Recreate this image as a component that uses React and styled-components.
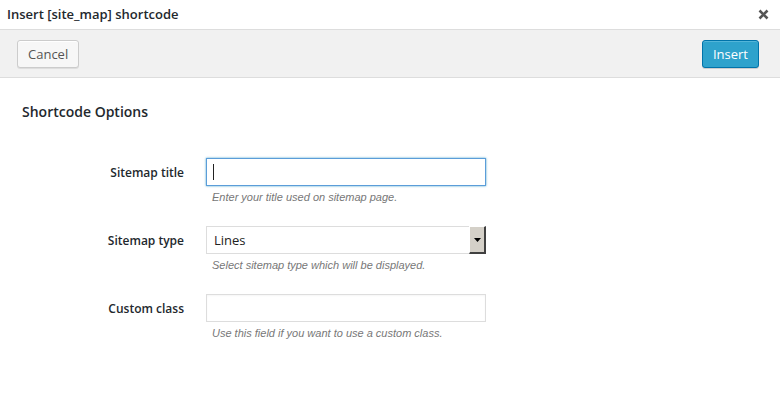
import styled, { createGlobalStyle } from "styled-components";

const GlobalStyle = createGlobalStyle`
  body {
    margin: 0;
    background: #ffffff;
    font-family: "Open Sans", "Noto Sans", sans-serif;
    color: #444;
  }
`;

const Modal = styled.div`
  width: 780px;
  height: 394px;
  background: #fff;
  display: flex;
  flex-direction: column;
`;

const TitleBar = styled.div`
  height: 29px;
  display: flex;
  align-items: center;
  justify-content: space-between;
  padding: 0 10px 0 7px;
  border-bottom: 1px solid #dddddd;
  box-sizing: content-box;
`;

const Title = styled.h1`
  margin: 0;
  font-size: 13px;
  font-weight: 600;
  color: #23282d;
  line-height: 29px;
`;

const Close = styled.button`
  border: 0;
  background: none;
  padding: 0;
  width: 14px;
  height: 14px;
  display: flex;
  align-items: center;
  justify-content: center;
  cursor: pointer;
`;

const Toolbar = styled.div`
  height: 47px;
  background: #f1f1f1;
  border-bottom: 1px solid #dddddd;
  display: flex;
  align-items: center;
  justify-content: space-between;
  padding: 0 21px 0 17px;
`;

const Button = styled.button`
  height: 28px;
  padding: 0 10px;
  font-family: "Open Sans", "Noto Sans", sans-serif;
  font-size: 13px;
  border-radius: 3px;
  cursor: pointer;
  border: 1px solid ${(p) => (p.$primary ? "#0073aa" : "#cccccc")};
  background: ${(p) => (p.$primary ? "#2ea2cc" : "#f7f7f7")};
  color: ${(p) => (p.$primary ? "#ffffff" : "#555555")};
  box-shadow: ${(p) =>
    p.$primary
      ? "inset 0 1px 0 rgba(120,200,230,.5), 0 1px 0 rgba(0,0,0,.15)"
      : "inset 0 1px 0 #fff, 0 1px 0 rgba(0,0,0,.08)"};
`;

const Body = styled.div`
  padding: 23px 22px;
`;

const SectionTitle = styled.h2`
  margin: 0 0 35px;
  font-size: 14px;
  font-weight: 600;
  color: #23282d;
  line-height: 22px;
`;

const Form = styled.div`
  display: flex;
  flex-direction: column;
  gap: 20px;
`;

const Row = styled.div`
  display: grid;
  grid-template-columns: 162px 280px;
  column-gap: 22px;
  align-items: start;
`;

const Label = styled.label`
  font-size: 12px;
  font-weight: 600;
  color: #23282d;
  text-align: right;
  line-height: 28px;
  padding-top: 1px;
`;

const Field = styled.div`
  display: flex;
  flex-direction: column;
`;

const TextInput = styled.div`
  height: 28px;
  box-sizing: border-box;
  border: 1px solid ${(p) => (p.$focus ? "#5b9dd9" : "#dddddd")};
  box-shadow: ${(p) =>
    p.$focus ? "0 0 2px rgba(30,140,190,.8)" : "inset 0 1px 2px rgba(0,0,0,.04)"};
  background: #fff;
  display: flex;
  align-items: center;
  padding-left: 6px;
`;

const Caret = styled.span`
  width: 1px;
  height: 16px;
  background: #222;
`;

const Select = styled.div`
  height: 28px;
  box-sizing: border-box;
  border: 1px solid #dddddd;
  background: #fff;
  display: flex;
  align-items: stretch;
  justify-content: space-between;
  font-size: 13px;
  color: #222;
`;

const SelectValue = styled.span`
  padding-left: 7px;
  line-height: 26px;
`;

const SelectArrow = styled.span`
  width: 14px;
  background: #d4d0c8;
  border-left: 1px solid #fff;
  border-top: 1px solid #fff;
  border-right: 2px solid #404040;
  border-bottom: 2px solid #404040;
  display: flex;
  align-items: center;
  justify-content: center;
  margin: -1px -1px -1px 0;
`;

const Help = styled.p`
  margin: 2px 0 0 6px;
  font-family: "Liberation Sans", Arial, sans-serif;
  font-style: italic;
  font-size: 11px;
  color: #777;
  line-height: 18px;
`;

export default function App() {
  return (
    <>
      <GlobalStyle />
      <Modal>
        <TitleBar>
          <Title>Insert [site_map] shortcode</Title>
          <Close aria-label="Close">
            <svg width="11" height="11" viewBox="0 0 11 11">
              <path d="M1.5 1.5 L9.5 9.5 M9.5 1.5 L1.5 9.5" stroke="#555" strokeWidth="2.6" />
            </svg>
          </Close>
        </TitleBar>
        <Toolbar>
          <Button>Cancel</Button>
          <Button $primary>Insert</Button>
        </Toolbar>
        <Body>
          <SectionTitle>Shortcode Options</SectionTitle>
          <Form>
            <Row>
              <Label>Sitemap title</Label>
              <Field>
                <TextInput $focus>
                  <Caret />
                </TextInput>
                <Help>Enter your title used on sitemap page.</Help>
              </Field>
            </Row>
            <Row>
              <Label>Sitemap type</Label>
              <Field>
                <Select>
                  <SelectValue>Lines</SelectValue>
                  <SelectArrow>
                    <svg width="7" height="4" viewBox="0 0 7 4">
                      <path d="M0 0 H7 L3.5 4 Z" fill="#000" />
                    </svg>
                  </SelectArrow>
                </Select>
                <Help>Select sitemap type which will be displayed.</Help>
              </Field>
            </Row>
            <Row>
              <Label>Custom class</Label>
              <Field>
                <TextInput />
                <Help>Use this field if you want to use a custom class.</Help>
              </Field>
            </Row>
          </Form>
        </Body>
      </Modal>
    </>
  );
}
